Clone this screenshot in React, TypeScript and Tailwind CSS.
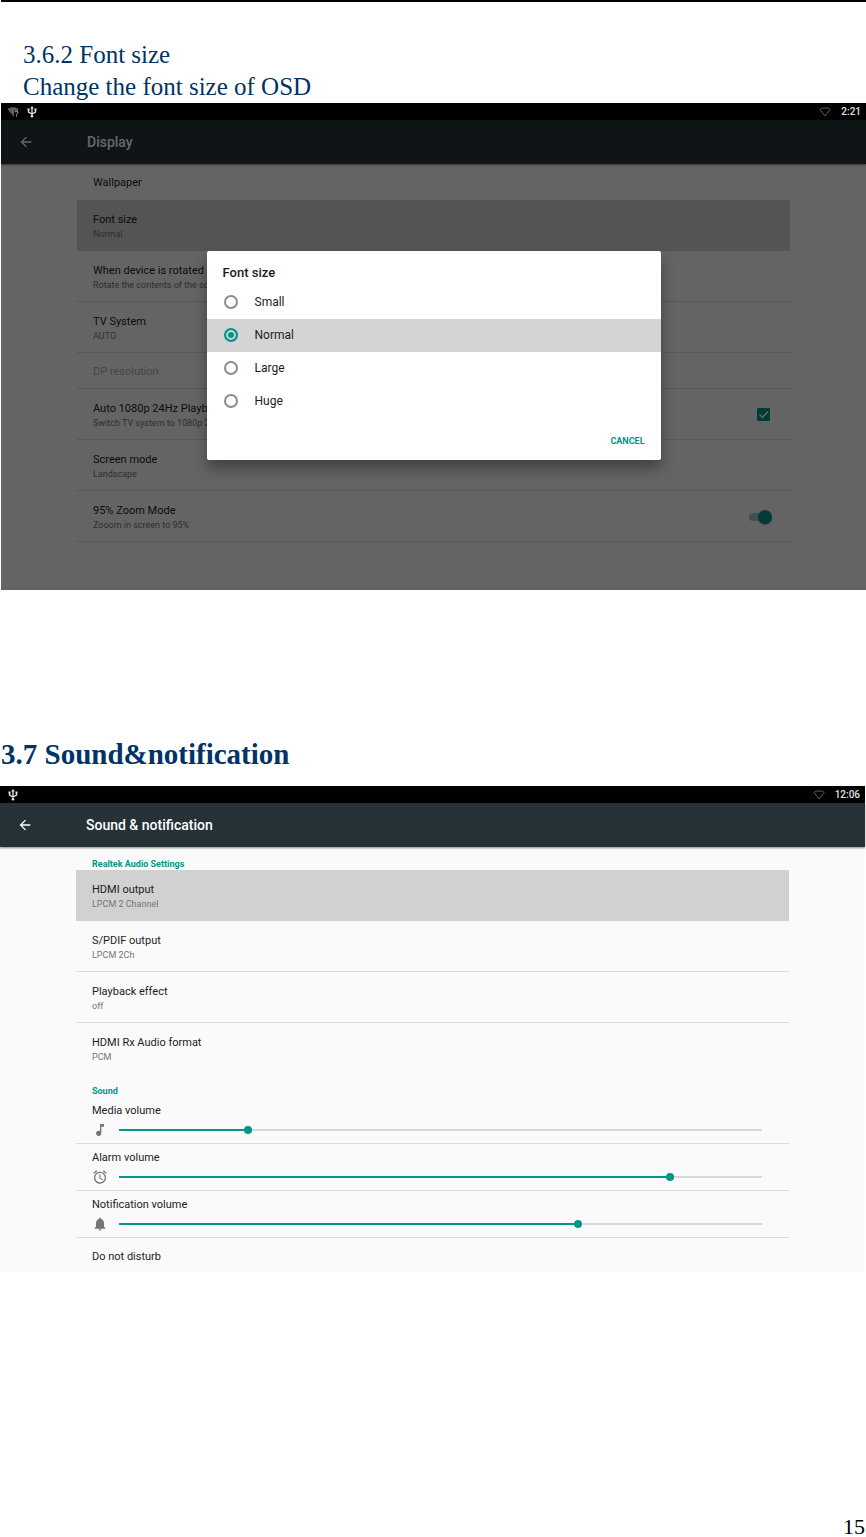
import { useState, type ReactNode } from "react";
import { MdAlarm, MdArrowBack, MdMusicNote, MdNotifications } from "react-icons/md";
import type { IconType } from "react-icons";

type Preference = {
  title: string;
  summary?: string;
  selected?: boolean;
};

type Volume = {
  id: string;
  label: string;
  icon: IconType;
  max: number;
  initial: number;
};

const AUDIO_SETTINGS: Preference[] = [
  { title: "HDMI output", summary: "LPCM 2 Channel", selected: true },
  { title: "S/PDIF output", summary: "LPCM 2Ch" },
  { title: "Playback effect", summary: "off" },
];

const VOLUMES: Volume[] = [
  { id: "media", label: "Media volume", icon: MdMusicNote, max: 15, initial: 3 },
  { id: "alarm", label: "Alarm volume", icon: MdAlarm, max: 7, initial: 6 },
  {
    id: "notification",
    label: "Notification volume",
    icon: MdNotifications,
    max: 7,
    initial: 5,
  },
];

const FONT_SIZES = ["Small", "Normal", "Large", "Huge"];

function WifiOutline() {
  return (
    <svg viewBox="0 0 12 12" className="size-3" fill="none" aria-hidden>
      <path
        d="M6 10 1 3.500C1 2.500 3 2 6 2s5 .5 5 1.500Z"
        stroke="#5f5f5f"
        strokeLinejoin="round"
      />
    </svg>
  );
}

function WifiUnknown() {
  return (
    <svg viewBox="0 0 12 12" className="size-3" fill="none" aria-hidden>
      <path d="M6.500 10.500.5 3C2 1.800 4 1.300 6 1.300S10 1.800 11.500 3L11 4.500H8L7 6v4Z" fill="#5c5c5c" />
      <path d="M8.200 6.300c0-1.700 2.800-1.700 2.800 0 0 1-1.400 1-1.400 2.200M9.600 9.300v1.200" stroke="#d0d0d0" />
    </svg>
  );
}

function UsbIcon() {
  return (
    <svg viewBox="0 0 14 14" className="size-3.5" fill="none" aria-hidden>
      <path d="M7 3v8M3.500 4.500v2.700L7 9l3.500-1.800V4.500" stroke="#e4e4e4" strokeWidth="1.300" />
      <path d="M7 1 5.200 3.600h3.600ZM2.500 3.500h2v2h-2ZM9.500 3.500h2v2h-2Z" fill="#e4e4e4" />
      <circle cx="7" cy="11.300" r="1.300" fill="#e4e4e4" />
    </svg>
  );
}

function StatusBar({ time, children }: { time: string; children: ReactNode }) {
  return (
    <div className="flex h-[17px] items-center justify-between bg-black pr-[5px] pl-1.5 text-white">
      <div className="flex items-center gap-1.5">{children}</div>
      <div className="flex items-center gap-2.5">
        <WifiOutline />
        <span className="text-[10px] leading-3 font-medium text-[#e0e0e0]">{time}</span>
      </div>
    </div>
  );
}

function Toolbar({ title }: { title: string }) {
  return (
    <header className="relative flex h-11 items-center bg-[#263238] pl-[17px] text-white shadow-[0_1px_2px_rgba(0,0,0,0.45)]">
      <button type="button" aria-label="Navigate up" className="w-[69px]">
        <MdArrowBack className="size-4" />
      </button>
      <h3 className="text-[14px] leading-4 font-medium">{title}</h3>
    </header>
  );
}

function PreferenceRow({
  title,
  summary,
  selected,
  disabled,
  divider = true,
  htmlFor,
  children,
}: Preference & {
  disabled?: boolean;
  divider?: boolean;
  htmlFor?: string;
  children?: ReactNode;
}) {
  const Text = htmlFor ? "label" : "div";

  return (
    <li
      className={`flex justify-between px-4 ${summary ? "h-[51px] pt-[13px]" : "h-9 pt-3"} ${
        selected ? "bg-[#d1d1d1]" : ""
      } ${divider && !selected ? "border-b border-[#dcdcdc]" : ""}`}
    >
      <Text
        htmlFor={htmlFor}
        className={`block ${disabled ? "text-[#adadad]" : "text-[#1c1c1c]"}`}
      >
        <span className="block text-[11px] leading-[14px]">{title}</span>
        {summary && (
          <span className="block text-[9px] leading-[14px] text-[#757575]">{summary}</span>
        )}
      </Text>
      {children}
    </li>
  );
}

function FontSizeDialog() {
  const [size, setSize] = useState("Normal");

  return (
    <div className="absolute inset-0 flex items-center justify-center bg-black/60">
      <div
        role="dialog"
        aria-labelledby="font-size-title"
        className="w-[454px] rounded-[2px] bg-white shadow-[0_8px_14px_rgba(0,0,0,0.35)]"
      >
        <h4
          id="font-size-title"
          className="px-4 pt-3.5 pb-[5px] text-[13px] leading-4 font-medium text-[#1c1c1c]"
        >
          Font size
        </h4>
        {FONT_SIZES.map((name) => (
          <label
            key={name}
            className={`flex h-[33px] items-center gap-[17px] px-[17px] text-[12px] leading-4 text-[#1c1c1c] ${
              size === name ? "bg-[#d4d4d4]" : ""
            }`}
          >
            <input
              type="radio"
              name="font-size"
              checked={size === name}
              onChange={() => setSize(name)}
              className="size-3.5 appearance-none rounded-full border-2 border-[#8c8c8c] checked:border-[#009688] checked:bg-[#009688] checked:shadow-[inset_0_0_0_2px_#d4d4d4]"
            />
            {name}
          </label>
        ))}
        <div className="flex justify-end px-4 pt-4 pb-3">
          <button type="button" className="text-[9px] leading-[14px] font-bold text-[#009688]">
            CANCEL
          </button>
        </div>
      </div>
    </div>
  );
}

function DisplayScreen() {
  const [auto24, setAuto24] = useState(true);
  const [zoom, setZoom] = useState(true);

  return (
    <div className="ml-px">
      <StatusBar time="2:21">
        <WifiUnknown />
        <UsbIcon />
      </StatusBar>
      <div className="relative overflow-hidden bg-[#fafafa]">
        <Toolbar title="Display" />
        <ul className="mx-[76px] pb-12">
          <PreferenceRow title="Wallpaper" divider={false} />
          <PreferenceRow title="Font size" summary="Normal" selected />
          <PreferenceRow
            title="When device is rotated"
            summary="Rotate the contents of the screen"
          />
          <PreferenceRow title="TV System" summary="AUTO" />
          <PreferenceRow title="DP resolution" disabled />
          <PreferenceRow
            title="Auto 1080p 24Hz Playback"
            summary="Switch TV system to 1080p 24Hz"
            htmlFor="auto-24hz"
          >
            <span className="mr-1 grid place-content-start pt-1.5">
              <input
                id="auto-24hz"
                type="checkbox"
                checked={auto24}
                onChange={(e) => setAuto24(e.target.checked)}
                className="col-start-1 row-start-1 size-[13px] appearance-none rounded-[1px] border border-[#757575] checked:border-[#009688] checked:bg-[#009688]"
              />
              {auto24 && (
                <svg
                  viewBox="0 0 13 13"
                  className="pointer-events-none col-start-1 row-start-1 size-[13px]"
                  fill="none"
                  aria-hidden
                >
                  <path d="m2.500 6.500 3 3L11 3.500" stroke="#fff" strokeWidth="1.400" />
                </svg>
              )}
            </span>
          </PreferenceRow>
          <PreferenceRow title="Screen mode" summary="Landscape" />
          <PreferenceRow title="95% Zoom Mode" summary="Zooom in screen to 95%" htmlFor="zoom-mode">
            <input
              id="zoom-mode"
              type="checkbox"
              role="switch"
              checked={zoom}
              onChange={(e) => setZoom(e.target.checked)}
              className="relative mt-1.5 mr-0.5 h-3.5 w-[23px] appearance-none before:absolute before:top-[3px] before:left-0 before:h-2 before:w-5 before:rounded-full before:bg-[#c4c4c4] after:absolute after:top-0 after:left-0 after:size-3.5 after:rounded-full after:bg-[#f1f1f1] after:shadow-[0_1px_1px_rgba(0,0,0,0.3)] checked:before:bg-[#9fc9c5] checked:after:left-[9px] checked:after:bg-[#009688]"
            />
          </PreferenceRow>
        </ul>
        <FontSizeDialog />
      </div>
    </div>
  );
}

function CategoryTitle({ children }: { children: ReactNode }) {
  return (
    <h4 className="px-4 pt-[11px] text-[9px] leading-3 font-bold text-[#009688]">{children}</h4>
  );
}

function VolumeRow({ id, label, icon: Icon, max, initial }: Volume) {
  const [value, setValue] = useState(initial);
  const pct = (value / max) * 100;

  return (
    <li className="h-[47px] border-b border-[#dcdcdc] px-4 pt-[7px] text-[#1c1c1c]">
      <label htmlFor={id} className="block text-[11px] leading-[14px]">
        {label}
      </label>
      <div className="flex items-center gap-[7px] pt-1 pr-[7px]">
        <Icon className="size-4 shrink-0 text-[#757575]" />
        <input
          id={id}
          type="range"
          min={0}
          max={max}
          value={value}
          onChange={(e) => setValue(Number(e.target.value))}
          className="h-4 min-w-0 flex-1 appearance-none bg-[length:calc(100%-8px)_2px] bg-center bg-no-repeat [&::-webkit-slider-thumb]:size-2 [&::-webkit-slider-thumb]:appearance-none [&::-webkit-slider-thumb]:rounded-full [&::-webkit-slider-thumb]:bg-[#009688]"
          style={{
            backgroundImage: `linear-gradient(to right, #009688 ${pct}%, #d8d8d8 ${pct}%)`,
          }}
        />
      </div>
    </li>
  );
}

function SoundScreen() {
  return (
    <div className="mr-px">
      <StatusBar time="12:06">
        <UsbIcon />
      </StatusBar>
      <div className="bg-[#fafafa]">
        <Toolbar title="Sound &amp; notification" />
        <div className="mx-[76px]">
          <CategoryTitle>Realtek Audio Settings</CategoryTitle>
          <ul>
            {AUDIO_SETTINGS.map((pref) => (
              <PreferenceRow key={pref.title} {...pref} />
            ))}
            <PreferenceRow title="HDMI Rx Audio format" summary="PCM" divider={false} />
          </ul>
          <CategoryTitle>Sound</CategoryTitle>
          <ul>
            {VOLUMES.map((volume) => (
              <VolumeRow key={volume.id} {...volume} />
            ))}
            <li className="px-4 pt-3 pb-2 text-[11px] leading-[14px] text-[#1c1c1c]">
              Do not disturb
            </li>
          </ul>
        </div>
      </div>
    </div>
  );
}

export default function App() {
  return (
    <main className="bg-white font-['Roboto',sans-serif]">
      <div className="ml-px border-t-2 border-black" />

      <section className="pt-[37px]">
        <div className="pl-[23px] font-['Liberation_Serif',serif] text-[25px] leading-8 text-[#003366]">
          <h2>3.6.2 Font size</h2>
          <p>Change the font size of OSD</p>
        </div>
        <DisplayScreen />
      </section>

      <section className="pt-[146px]">
        <h2 className="pb-3.5 pl-px font-['Liberation_Serif',serif] text-[29px] leading-9 font-bold text-[#003366]">
          3.7 Sound&amp;notification
        </h2>
        <SoundScreen />
      </section>

      <footer className="pt-[245px] pr-px text-right font-['Liberation_Serif',serif] text-[22px] leading-5 text-black">
        15
      </footer>
    </main>
  );
}
